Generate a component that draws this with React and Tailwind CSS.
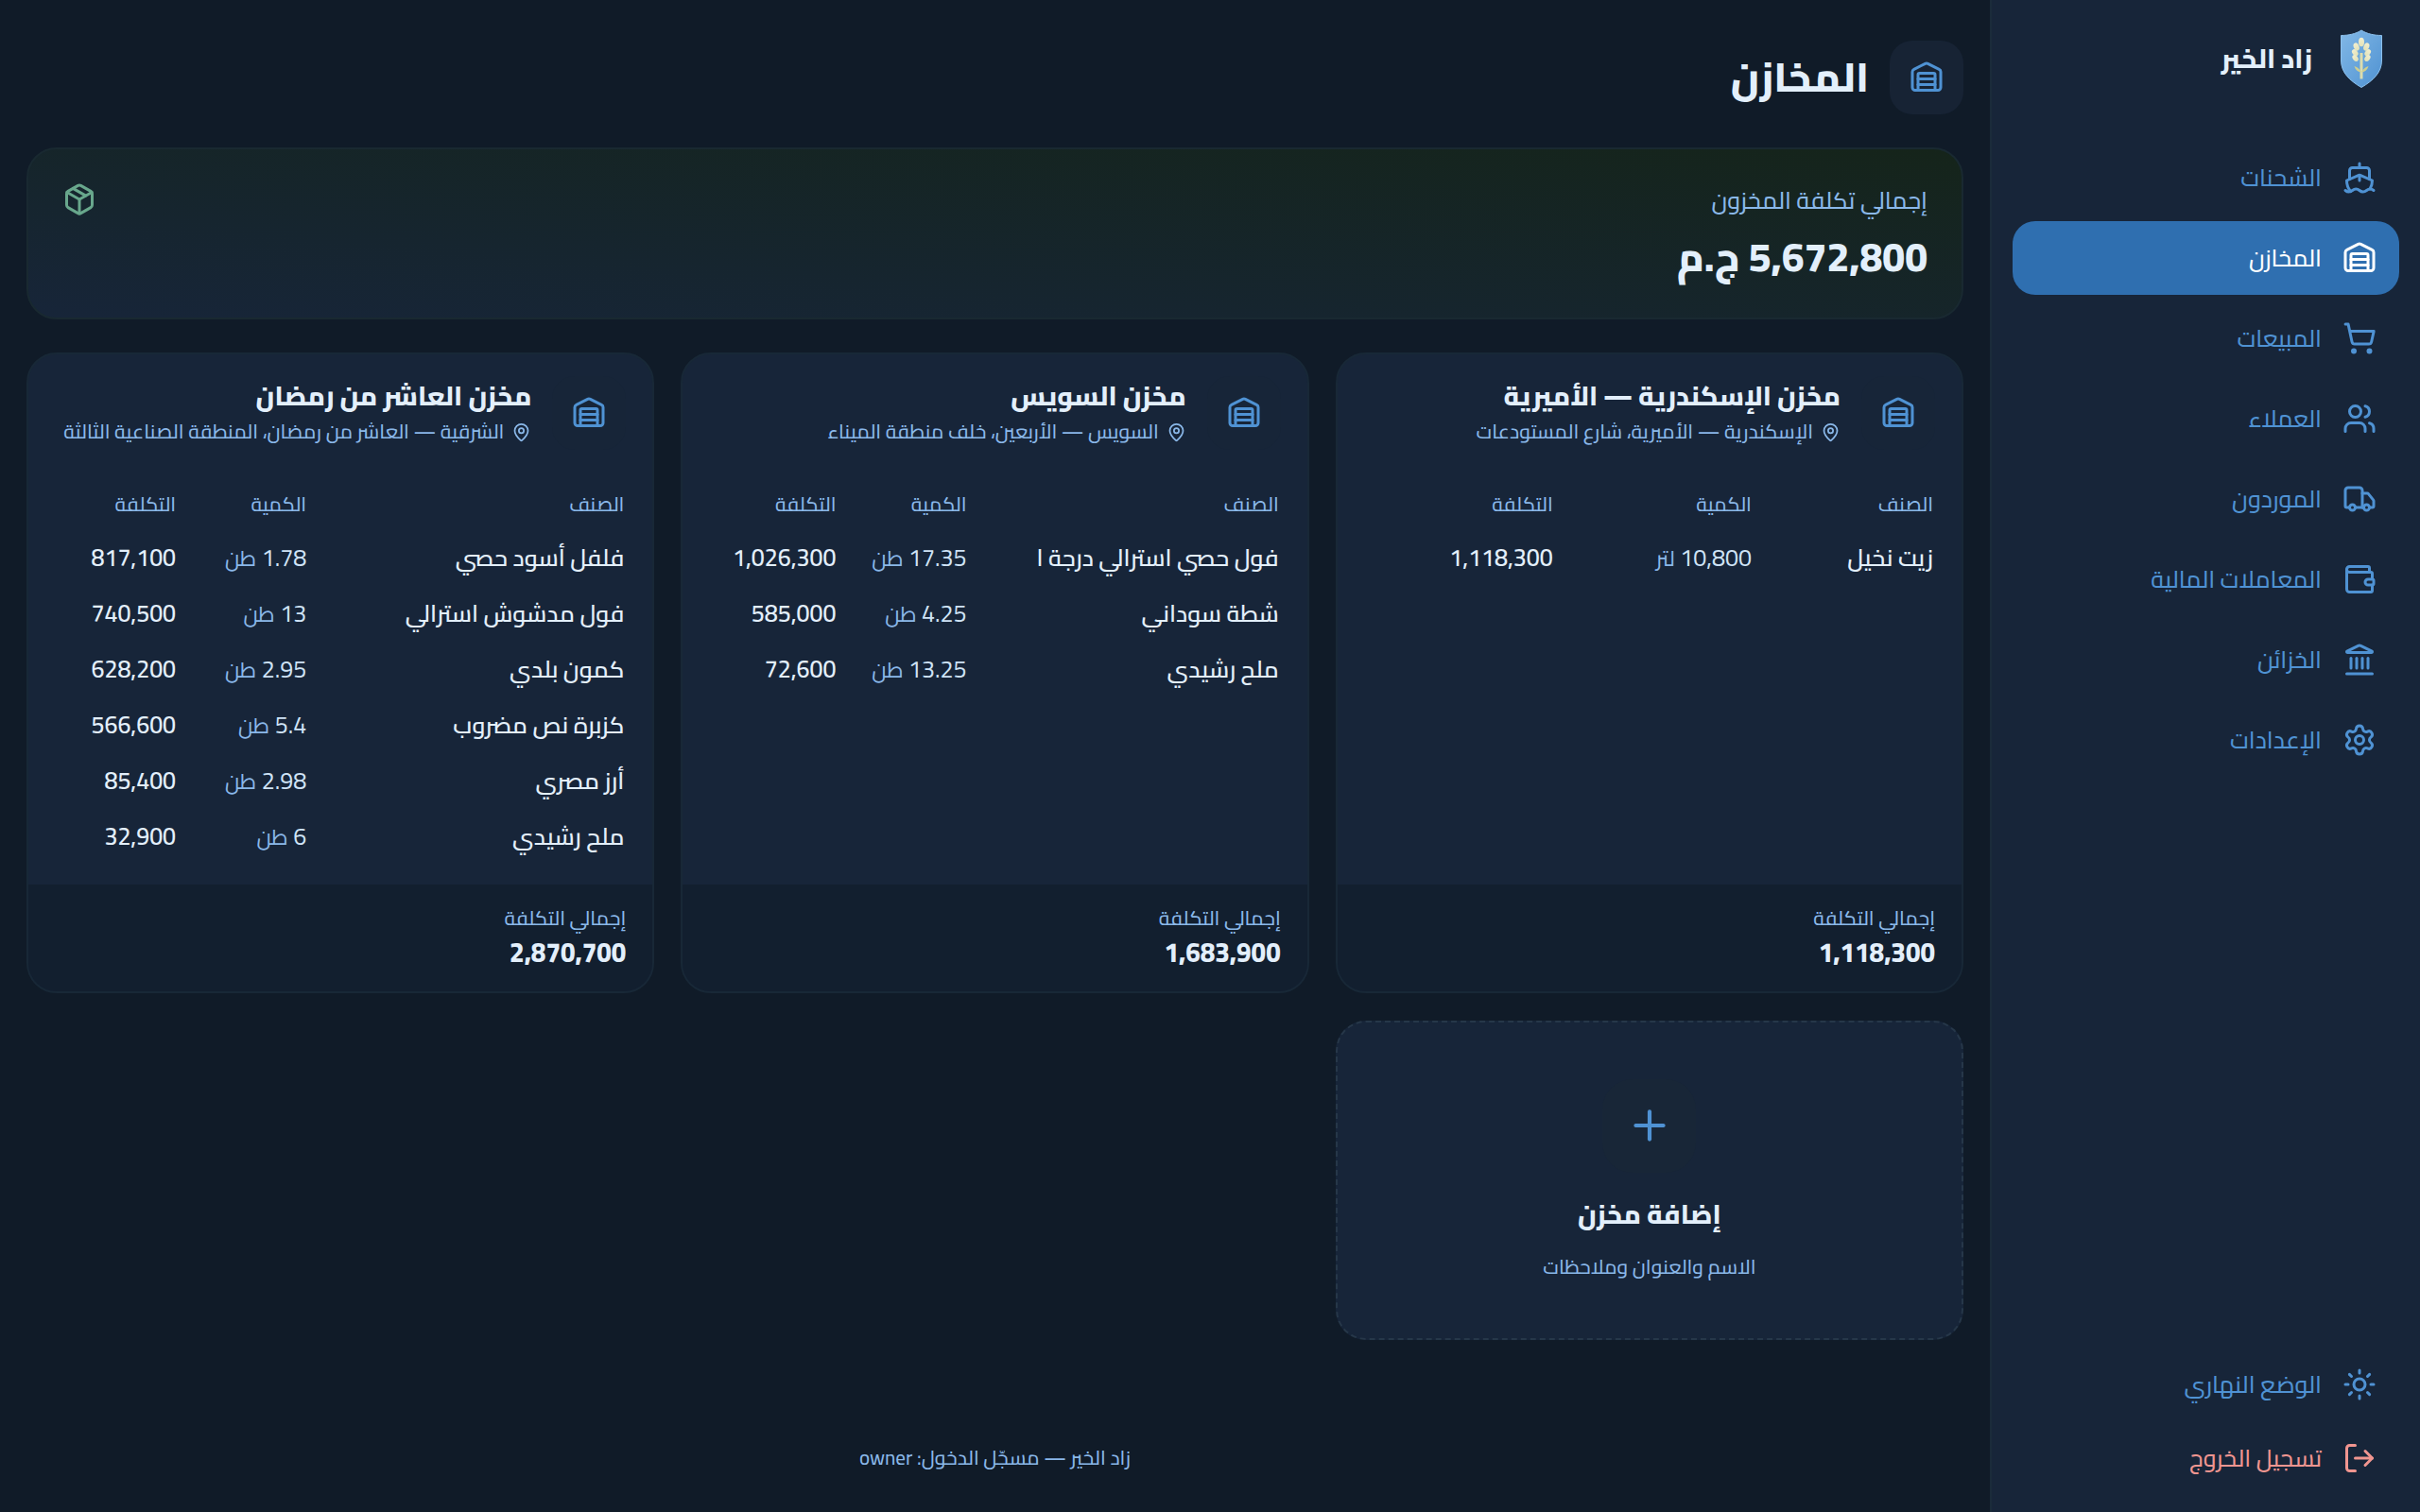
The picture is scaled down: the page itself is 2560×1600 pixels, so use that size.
import {
  Landmark,
  LogOut,
  MapPin,
  Package,
  Plus,
  Settings,
  Ship,
  ShoppingCart,
  Sun,
  Truck,
  Users,
  Wallet,
  Warehouse,
} from "lucide-react";

const navItems = [
  { id: "shipments", name: "الشحنات", icon: Ship },
  { id: "warehouses", name: "المخازن", icon: Warehouse },
  { id: "sales", name: "المبيعات", icon: ShoppingCart },
  { id: "clients", name: "العملاء", icon: Users },
  { id: "suppliers", name: "الموردون", icon: Truck },
  { id: "transactions", name: "المعاملات المالية", icon: Wallet },
  { id: "safes", name: "الخزائن", icon: Landmark },
  { id: "settings", name: "الإعدادات", icon: Settings },
];

const warehouses = [
  {
    id: 1,
    name: "مخزن الإسكندرية — الأميرية",
    address: "الإسكندرية — الأميرية، شارع المستودعات",
    total: "1,118,300",
    cols: ["w-[32%]", "w-[35%]", "w-[33%]"],
    items: [{ name: "زيت نخيل", qty: "10,800", unit: "لتر", cost: "1,118,300" }],
  },
  {
    id: 2,
    name: "مخزن السويس",
    address: "السويس — الأربعين، خلف منطقة الميناء",
    total: "1,683,900",
    cols: ["w-[55%]", "w-[23%]", "w-[22%]"],
    items: [
      { name: "فول حصي استرالي درجة ا", qty: "17.35", unit: "طن", cost: "1,026,300" },
      { name: "شطة سوداني", qty: "4.25", unit: "طن", cost: "585,000" },
      { name: "ملح رشيدي", qty: "13.25", unit: "طن", cost: "72,600" },
    ],
  },
  {
    id: 3,
    name: "مخزن العاشر من رمضان",
    address: "الشرقية — العاشر من رمضان، المنطقة الصناعية الثالثة",
    total: "2,870,700",
    cols: ["w-[56%]", "w-[23%]", "w-[21%]"],
    items: [
      { name: "فلفل أسود حصي", qty: "1.78", unit: "طن", cost: "817,100" },
      { name: "فول مدشوش استرالي", qty: "13", unit: "طن", cost: "740,500" },
      { name: "كمون بلدي", qty: "2.95", unit: "طن", cost: "628,200" },
      { name: "كزبرة نص مضروب", qty: "5.4", unit: "طن", cost: "566,600" },
      { name: "أرز مصري", qty: "2.98", unit: "طن", cost: "85,400" },
      { name: "ملح رشيدي", qty: "6", unit: "طن", cost: "32,900" },
    ],
  },
];

const Logo = () => (
  <svg viewBox="0 0 48 64" className="h-[64px] w-[48px]" aria-hidden="true">
    <defs>
      <linearGradient id="shield" x1="0" y1="0" x2="1" y2="1">
        <stop offset="0" stopColor="#82b8e6" />
        <stop offset="1" stopColor="#4f92d2" />
      </linearGradient>
      <linearGradient id="wheat" x1="0" y1="0" x2="0" y2="1">
        <stop offset="0" stopColor="#f3efcf" />
        <stop offset="1" stopColor="#e2e2b8" />
      </linearGradient>
    </defs>
    <path
      d="M24 2C18 6 10 7.500 2.500 7.500V34C2.500 47 12 55.500 24 62.500C36 55.500 45.500 47 45.500 34V7.500C38 7.500 30 6 24 2Z"
      fill="url(#shield)"
      stroke="#8cc0ec"
      strokeWidth="1"
    />
    <g fill="url(#wheat)">
      <ellipse cx="24" cy="14.500" rx="3" ry="4.800" />
      <ellipse cx="18.700" cy="19.500" rx="2.900" ry="4.200" transform="rotate(-22 18.700 19.500)" />
      <ellipse cx="29.300" cy="19.500" rx="2.900" ry="4.200" transform="rotate(22 29.300 19.500)" />
      <ellipse cx="17.300" cy="25.700" rx="2.700" ry="4" transform="rotate(-40 17.300 25.700)" />
      <ellipse cx="30.700" cy="25.700" rx="2.700" ry="4" transform="rotate(40 30.700 25.700)" />
      <ellipse cx="17.600" cy="31.500" rx="2.600" ry="3.800" transform="rotate(-40 17.600 31.500)" />
      <ellipse cx="30.400" cy="31.500" rx="2.600" ry="3.800" transform="rotate(40 30.400 31.500)" />
    </g>
    <path d="M24 26V53.500" stroke="#dcdcae" strokeWidth="3" />
    <path
      d="M23.500 45.500C21.500 42.500 19 40.500 16.500 40C17.500 43.500 20 46 23.500 46.500ZM24.500 45.500C26.500 42.500 29 40.500 31.500 40C30.500 43.500 28 46 24.500 46.500Z"
      fill="#cfcf90"
    />
  </svg>
);

const Sidebar = () => (
  <aside className="flex w-[455px] shrink-0 flex-col border-l-2 border-[#1a2b3a] bg-[#172539] px-[22px] pt-[27px] pb-[18px]">
    <div className="mb-[52px] flex items-center gap-[28px] px-4">
      <Logo />
      <span className="text-[28px] leading-[70px] font-extrabold text-[#e3effb]">زاد الخير</span>
    </div>

    <nav className="flex flex-col gap-[7px]">
      {navItems.map((item) => {
        const Icon = item.icon;
        const active = item.id === "warehouses";
        return (
          <a
            key={item.id}
            href={`#${item.id}`}
            aria-current={active ? "page" : undefined}
            className={`flex h-[78px] items-center gap-[22px] rounded-3xl px-6 text-[25px] font-medium ${
              active ? "bg-[#2f6fb0] text-white" : "text-[#4f92d3]"
            }`}
          >
            <Icon className="h-9 w-9" />
            {item.name}
          </a>
        );
      })}
    </nav>

    <div className="mt-auto flex flex-col">
      <button
        type="button"
        className="flex h-[78px] items-center gap-[22px] rounded-3xl px-6 text-[25px] font-medium text-[#4f92d3]"
      >
        <Sun className="h-9 w-9" />
        الوضع النهاري
      </button>
      <button
        type="button"
        className="flex h-[78px] items-center gap-[22px] rounded-3xl px-6 text-[25px] font-medium text-[#f09590]"
      >
        <LogOut className="h-9 w-9" />
        تسجيل الخروج
      </button>
    </div>
  </aside>
);

const WarehouseCard = ({ warehouse }) => (
  <article className="flex flex-col overflow-hidden rounded-[32px] border-2 border-[#182837] bg-[#172539]">
    <header className="flex items-start gap-[22px] px-[28px] pt-[23px]">
      <div className="flex h-[78px] w-[78px] shrink-0 items-center justify-center rounded-3xl bg-[#172538] text-[#4f92d3]">
        <Warehouse className="h-9 w-9" />
      </div>
      <div className="min-w-0">
        <h2 className="text-[28px] leading-[42px] font-extrabold text-[#e3effb]">{warehouse.name}</h2>
        <p className="flex items-center gap-2 text-[21px] leading-[34px] font-medium whitespace-nowrap text-[#8ab8e9]">
          <MapPin className="h-[21px] w-[21px] shrink-0" />
          {warehouse.address}
        </p>
      </div>
    </header>

    <div className="px-[30px] pt-[32px] pb-[22px]">
      <table className="w-full table-fixed text-right">
        <thead>
          <tr className="h-[52px] text-[21px] text-[#8ab8e9]">
            <th className={`font-medium ${warehouse.cols[0]}`}>الصنف</th>
            <th className={`font-medium ${warehouse.cols[1]}`}>الكمية</th>
            <th className={`font-medium ${warehouse.cols[2]}`}>التكلفة</th>
          </tr>
        </thead>
        <tbody>
          {warehouse.items.map((item) => (
            <tr key={item.name} className="h-[59px] text-[25px] whitespace-nowrap">
              <td className="font-semibold text-[#e3effb]">{item.name}</td>
              <td className="text-[#cfe3f6]">
                {item.qty} <span className="text-[23px] text-[#8ab8e9]">{item.unit}</span>
              </td>
              <td className="font-semibold text-[#e3effb]">{item.cost}</td>
            </tr>
          ))}
        </tbody>
      </table>
    </div>

    <footer className="mt-auto bg-[#121f2f] px-[28px] pt-[17px] pb-[24px]">
      <p className="text-[21px] leading-[38px] font-medium text-[#8ab8e9]">إجمالي التكلفة</p>
      <p className="text-[28px] leading-[34px] font-extrabold text-[#e3effb]">{warehouse.total}</p>
    </footer>
  </article>
);

const App = () => {
  return (
    <div
      dir="rtl"
      className="flex min-h-screen bg-[#101b28] font-['Cairo','Noto_Sans_Arabic','Noto_Sans',sans-serif] text-[#e3effb]"
    >
      <Sidebar />

      <main className="flex min-w-0 flex-1 flex-col px-[28px] pt-[43px]">
        {/* Page title */}
        <div className="mb-[35px] flex items-center gap-[22px]">
          <div className="flex h-[78px] w-[78px] items-center justify-center rounded-3xl bg-[#172334] text-[#4f92d3]">
            <Warehouse className="h-9 w-9" />
          </div>
          <h1 className="text-[43px] leading-[76px] font-extrabold">المخازن</h1>
        </div>

        {/* Total stock cost */}
        <section className="mb-[35px] flex items-start justify-between rounded-[32px] border-2 border-[#192931] bg-linear-to-bl from-[#15241a] to-[#172539] px-9 pt-[31px] pb-[29px]">
          <div>
            <p className="text-[25px] leading-[46px] font-medium text-[#8ab8e9]">إجمالي تكلفة المخزون</p>
            <p className="mt-0.5 text-[43px] leading-[70px] font-extrabold">5,672,800 ج.م</p>
          </div>
          <Package className="mt-1 h-9 w-9 text-[#68a78c]" />
        </section>

        {/* Warehouses */}
        <div className="grid grid-cols-3 gap-x-[28px] gap-y-[29px]">
          {warehouses.map((warehouse) => (
            <WarehouseCard key={warehouse.id} warehouse={warehouse} />
          ))}

          <button
            type="button"
            className="flex h-[338px] flex-col items-center justify-center rounded-[32px] border-2 border-dashed border-[#263749] bg-[#172539] pt-3"
          >
            <span className="mb-4 flex h-[99px] w-[99px] items-center justify-center rounded-[32px] bg-[#182637] text-[#4f92d3]">
              <Plus className="h-[50px] w-[50px]" />
            </span>
            <span className="text-[28px] leading-[56px] font-extrabold">إضافة مخزن</span>
            <span className="text-[21px] leading-[56px] font-medium text-[#8ab8e9]">الاسم والعنوان وملاحظات</span>
          </button>
        </div>

        <footer className="mt-auto pb-[37px] text-center text-[21px] leading-[40px] font-medium text-[#8ab8e9]">
          زاد الخير — مسجّل الدخول: owner
        </footer>
      </main>
    </div>
  );
};

export default App;
